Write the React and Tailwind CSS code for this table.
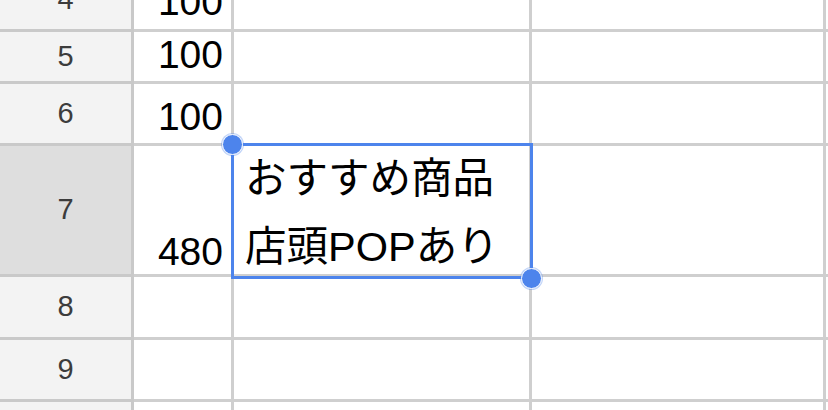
import React from "react";

// row heights include the 3px bottom grid line
const ROWS = [
  { n: 4, h: "h-[62px]", a: "100", pb: "pb-[8px]" },
  { n: 5, h: "h-[52px]", a: "100", pb: "pb-[7px]" },
  { n: 6, h: "h-[62px]", a: "100", pb: "pb-[7px]" },
  { n: 7, h: "h-[131px]", a: "480", pb: "pb-[3px]", selected: true },
  { n: 8, h: "h-[63px]", a: "", pb: "pb-[7px]" },
  { n: 9, h: "h-[62px]", a: "", pb: "pb-[7px]" },
  { n: 10, h: "h-[62px]", a: "", pb: "pb-[7px]" },
];

const FONT = { fontFamily: '"Liberation Sans", "Noto Sans CJK JP", Arial, sans-serif' };

function Handle({ className }) {
  return (
    <div
      className={`absolute w-[21px] h-[21px] rounded-full bg-[#4d84ec] border-[1.5px] border-white shadow-[0_0_0_1px_rgba(77,132,236,0.35)] ${className}`}
    />
  );
}

export default function App() {
  return (
    <div className="w-[828px] h-[410px] overflow-hidden bg-white" style={FONT}>
      <div className="-mt-[30px]">
        {ROWS.map((r) => (
          <div key={r.n} className={`flex ${r.h}`}>
            {/* row header */}
            <div
              className={`w-[134px] shrink-0 border-r-[3px] border-b-[3px] border-[#c9c9c9] flex items-center justify-center text-[29px] text-[#3c3c3c] ${
                r.selected ? "bg-[#dedede]" : "bg-[#f3f3f3]"
              }`}
            >
              {r.n}
            </div>

            {/* column A */}
            <div
              className={`w-[100px] shrink-0 border-r-[3px] border-b-[3px] border-[#cfcfcf] flex items-end justify-end pr-[8px] ${r.pb} text-[39px] leading-none text-black`}
            >
              {r.a}
            </div>

            {/* column B */}
            <div className="w-[298px] shrink-0 border-r-[3px] border-b-[3px] border-[#cfcfcf] relative">
              {r.selected && (
                <>
                  <div className="pl-[11px] -mt-[1px] text-[41.5px] leading-[68px] text-black whitespace-nowrap">
                    <div>おすすめ商品</div>
                    <div>店頭POPあり</div>
                  </div>
                  <div className="absolute -left-[3px] -top-[3px] w-[302px] h-[136px] border-[3px] border-[#4d84ec] z-10" />
                  <Handle className="-left-[12px] -top-[12px] z-20" />
                  <Handle className="left-[287px] top-[122px] z-20" />
                </>
              )}
            </div>

            {/* column C */}
            <div className="w-[294px] shrink-0 border-r-[3px] border-b-[3px] border-[#cfcfcf]" />

            {/* column D */}
            <div className="flex-1 border-b-[3px] border-[#cfcfcf]" />
          </div>
        ))}
      </div>
    </div>
  );
}
